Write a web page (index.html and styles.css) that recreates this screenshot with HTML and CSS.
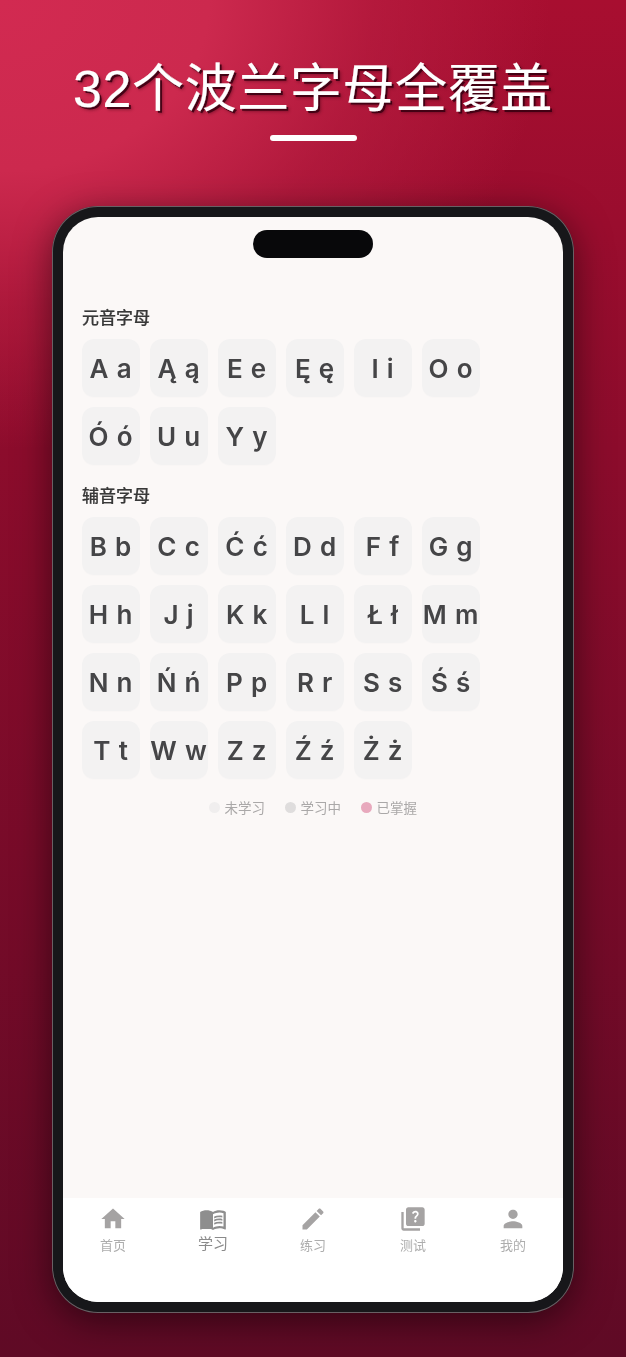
FILE: index.html
```html
<!DOCTYPE html>
<html lang="zh-CN">
<head>
<meta charset="utf-8">
<title>32个波兰字母全覆盖</title>
<link rel="stylesheet" href="styles.css">
</head>
<body>
<div class="poster">
  <header class="hero">
    <h1 class="hero-title">32个波兰字母全覆盖</h1>
    <div class="hero-rule"></div>
  </header>
  <div class="phone">
    <div class="screen">
      <div class="notch"></div>
      <main class="content">
        <h2 class="section-title">元音字母</h2>
        <div class="key-grid">
          <div class="key">A a</div><div class="key">Ą ą</div><div class="key">E e</div><div class="key">Ę ę</div><div class="key">I i</div><div class="key">O o</div>
          <div class="key">Ó ó</div><div class="key">U u</div><div class="key">Y y</div>
        </div>
        <h2 class="section-title second">辅音字母</h2>
        <div class="key-grid">
          <div class="key">B b</div><div class="key">C c</div><div class="key">Ć ć</div><div class="key">D d</div><div class="key">F f</div><div class="key">G g</div>
          <div class="key">H h</div><div class="key">J j</div><div class="key">K k</div><div class="key">L l</div><div class="key">Ł ł</div><div class="key">M m</div>
          <div class="key">N n</div><div class="key">Ń ń</div><div class="key">P p</div><div class="key">R r</div><div class="key">S s</div><div class="key">Ś ś</div>
          <div class="key">T t</div><div class="key">W w</div><div class="key">Z z</div><div class="key">Ź ź</div><div class="key">Ż ż</div>
        </div>
        <div class="legend">
          <span class="legend-item"><i class="dot dot-new"></i>未学习</span>
          <span class="legend-item"><i class="dot dot-learning"></i>学习中</span>
          <span class="legend-item"><i class="dot dot-known"></i>已掌握</span>
        </div>
      </main>
      <nav class="tabbar">
        <div class="tab">
          <svg class="tab-icon" viewBox="0 0 24 24"><path d="M10 20v-6h4v6h5v-8h3L12 3 2 12h3v8z"/></svg>
          <span class="tab-label">首页</span>
        </div>
        <div class="tab active">
          <svg class="tab-icon" viewBox="0 0 24 24"><path d="M21 5c-1.11-.35-2.33-.5-3.5-.5-1.95 0-4.05.4-5.5 1.5-1.45-1.1-3.55-1.5-5.5-1.5S2.45 4.9 1 6v14.65c0 .25.25.5.5.5.1 0 .15-.05.25-.05C3.1 20.45 5.05 20 6.5 20c1.95 0 4.05.4 5.5 1.5 1.35-.85 3.8-1.5 5.5-1.5 1.65 0 3.35.3 4.75 1.05.1.05.15.05.25.05.25 0 .5-.25.5-.5V6c-.6-.45-1.25-.75-2-1zm0 13.5c-1.1-.35-2.3-.5-3.5-.5-1.7 0-4.15.65-5.5 1.5V8c1.35-.85 3.8-1.5 5.5-1.5 1.2 0 2.4.15 3.5.5v11.5z"/><path d="M1.500 6.500h10.500v14h-10.500z"/><path d="M17.5 10.5c.88 0 1.73.09 2.5.26V9.24c-.79-.15-1.64-.24-2.5-.24-1.7 0-3.24.29-4.5.83v1.66c1.13-.64 2.7-.99 4.5-.99zM13 12.49v1.66c1.13-.64 2.7-.99 4.5-.99.88 0 1.73.09 2.5.26V11.900c-.79-.15-1.64-.24-2.5-.24-1.7 0-3.24.3-4.5.83zM17.5 14.330c-1.7 0-3.24.29-4.5.83v1.660c1.130-.64 2.700-.99 4.500-.99.88 0 1.730.09 2.500.26v-1.520c-.79-.16-1.640-.24-2.500-.24z"/></svg>
          <span class="tab-label">学习</span>
        </div>
        <div class="tab">
          <svg class="tab-icon" viewBox="0 0 24 24"><path d="M3 17.25V21h3.75L17.81 9.94l-3.75-3.75L3 17.25zM20.71 7.04c.39-.39.39-1.02 0-1.41l-2.34-2.34c-.39-.39-1.02-.39-1.41 0l-1.83 1.83 3.75 3.75 1.83-1.83z"/></svg>
          <span class="tab-label">练习</span>
        </div>
        <div class="tab">
          <svg class="tab-icon" viewBox="0 0 24 24"><path d="M4 6H2v14c0 1.1.9 2 2 2h14v-2H4V6z"/><path d="M20 2H8C6.9 2 6 2.9 6 4v12c0 1.1.9 2 2 2h12c1.1 0 2-.9 2-2V4C22 2.9 21.100 2 20 2zM14.010 15c-.59 0-1.050-.47-1.050-1.050 0-.59.47-1.040 1.050-1.040.59 0 1.040.45 1.040 1.040C15.040 14.530 14.600 15 14.010 15zM16.510 8.830c-.63.93-1.230 1.210-1.560 1.810-.13.24-.18.4-.18 1.180h-1.520c0-.41-.06-1.080.26-1.650.41-.73 1.180-1.160 1.630-1.800.48-.68.21-1.940-1.140-1.940-.88 0-1.320.67-1.500 1.230l-1.370-.57C11.510 5.960 12.520 5 13.990 5c1.230 0 2.080.56 2.510 1.260.37.61.58 1.730.01 2.570z"/></svg>
          <span class="tab-label">测试</span>
        </div>
        <div class="tab">
          <svg class="tab-icon" viewBox="0 0 24 24"><path d="M12 12c2.210 0 4-1.790 4-4s-1.790-4-4-4-4 1.790-4 4 1.790 4 4 4zm0 2c-2.670 0-8 1.340-8 4v2h16v-2c0-2.660-5.330-4-8-4z"/></svg>
          <span class="tab-label">我的</span>
        </div>
      </nav>
    </div>
  </div>
</div>
</body>
</html>
```

FILE: styles.css
```css
* { box-sizing: border-box; }

html, body {
  margin: 0;
  padding: 0;
}

.poster {
  width: 626px;
  height: 1357px;
  overflow: hidden;
  display: flex;
  flex-direction: column;
  align-items: center;
  background:
    radial-gradient(ellipse 550px 450px at 0 0, #d22a51 0%, #cc294e 38%, rgba(188, 32, 68, .6) 68%, rgba(168, 13, 48, 0) 100%),
    linear-gradient(180deg, #a80e30 0%, #8c0c2c 33%, #5f0a25 100%);
}

.hero {
  height: 206px;
  width: 100%;
  padding-top: 59px;
  display: flex;
  flex-direction: column;
  align-items: center;
}

.hero-title {
  margin: 0;
  height: 60px;
  font-family: "Liberation Sans", "Noto Sans CJK SC", sans-serif;
  font-size: 52px;
  line-height: 60px;
  font-weight: 400;
  letter-spacing: .6px;
  color: #fff;
  white-space: nowrap;
  -webkit-text-stroke: .2px #fff;
  text-shadow: 2px 2px 0 rgba(60, 0, 18, .9), 3px 3px 3px rgba(60, 0, 18, .4);
}

.hero-rule {
  width: 87px;
  height: 6px;
  margin-top: 16px;
  margin-left: 1px;
  border-radius: 3px;
  background: #fff;
}

.phone {
  width: 522px;
  height: 1107px;
  padding: 11px;
  border-radius: 46px;
  background: #17171a;
  box-shadow: 0 0 0 1px rgba(160, 145, 150, .6) inset, 0 8px 36px rgba(0, 0, 0, .5);
}

.screen {
  position: relative;
  height: 100%;
  border-radius: 35px;
  overflow: hidden;
  background: #fbf8f7;
  display: flex;
  flex-direction: column;
}

.notch {
  position: absolute;
  top: 13px;
  left: 190px;
  width: 120px;
  height: 28px;
  border-radius: 14px;
  background: #08080a;
}

.content {
  flex: 1;
  padding: 89px 19px 0;
  will-change: transform;
}

.section-title {
  margin: 0 0 11px;
  height: 22px;
  font-family: "Noto Sans CJK SC", sans-serif;
  font-size: 17px;
  line-height: 22px;
  font-weight: 500;
  color: #383838;
  -webkit-text-stroke: .2px #383838;
}

.section-title.second {
  margin-top: 19px;
  margin-bottom: 11px;
}

.key-grid {
  display: grid;
  grid-template-columns: repeat(6, 58px);
  grid-auto-rows: 58px;
  gap: 10px;
}

.key {
  display: flex;
  align-items: center;
  justify-content: center;
  padding-top: 1px;
  border-radius: 12px;
  background: #f3f2f2;
  box-shadow: 0 1px 1px rgba(0, 0, 0, .012);
  font-family: Inter, "Liberation Sans", sans-serif;
  font-size: 26px;
  font-weight: 600;
  letter-spacing: .8px;
  color: #454547;
  white-space: nowrap;
}

.legend {
  margin-top: 18px;
  display: flex;
  justify-content: center;
  gap: 20px;
  font-family: "Noto Sans CJK SC", sans-serif;
  font-size: 13.5px;
  line-height: 20px;
  color: #aaa8a8;
}

.legend-item {
  display: flex;
  align-items: center;
  gap: 4.5px;
}

.dot {
  width: 11px;
  height: 11px;
  border-radius: 50%;
}

.dot-new { background: #f0eeee; }
.dot-learning { background: #dfdddd; }
.dot-known { background: #e8a9bd; }

.tabbar {
  height: 104px;
  flex: none;
  background: #fff;
  display: flex;
}

.tab {
  flex: 1;
  padding-top: 7px;
  display: flex;
  flex-direction: column;
  align-items: center;
  font-family: "Noto Sans CJK SC", sans-serif;
  font-size: 13px;
  color: #adadad;
}

.tab-icon {
  display: block;
  width: 28px;
  height: 28px;
  fill: #a5a3a3;
}

.tab-label {
  margin-top: 2px;
  line-height: 20px;
  will-change: transform;
}

.tab.active {
  font-size: 15px;
  color: #8a8a8a;
}

.tab.active .tab-icon { fill: #8e8e8e; }
.tab.active .tab-label { margin-top: 0; }
```
